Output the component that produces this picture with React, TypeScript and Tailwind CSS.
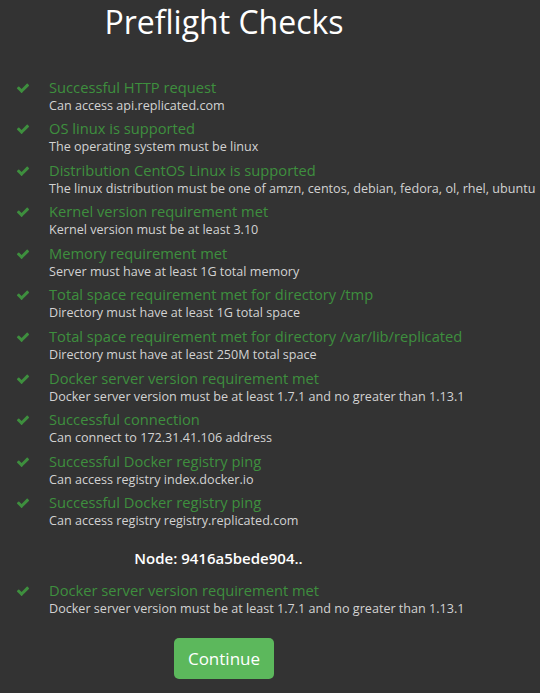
const checks = [
  { title: "Successful HTTP request", detail: "Can access api.replicated.com" },
  { title: "OS linux is supported", detail: "The operating system must be linux" },
  {
    title: "Distribution CentOS Linux is supported",
    detail: "The linux distribution must be one of amzn, centos, debian, fedora, ol, rhel, ubuntu",
  },
  { title: "Kernel version requirement met", detail: "Kernel version must be at least 3.10" },
  { title: "Memory requirement met", detail: "Server must have at least 1G total memory" },
  { title: "Total space requirement met for directory /tmp", detail: "Directory must have at least 1G total space" },
  {
    title: "Total space requirement met for directory /var/lib/replicated",
    detail: "Directory must have at least 250M total space",
  },
  {
    title: "Docker server version requirement met",
    detail: "Docker server version must be at least 1.7.1 and no greater than 1.13.1",
  },
  { title: "Successful connection", detail: "Can connect to 172.31.41.106 address" },
  { title: "Successful Docker registry ping", detail: "Can access registry index.docker.io" },
  { title: "Successful Docker registry ping", detail: "Can access registry registry.replicated.com" },
]

const nodeChecks = [
  {
    title: "Docker server version requirement met",
    detail: "Docker server version must be at least 1.7.1 and no greater than 1.13.1",
  },
]

function CheckIcon() {
  return (
    <svg viewBox="0 0 1792 1792" className="w-[14px] h-[14px]" fill="#3e8f3e">
      <path d="M1671 566q0 40-28 68l-724 724-136 136q-28 28-68 28t-68-28l-136-136-362-362q-28-28-28-68t28-68l136-136q28-28 68-28t68 28l294 295 656-657q28-28 68-28t68 28l136 136q28 28 28 68z" />
    </svg>
  )
}

function CheckRow({ title, detail }: { title: string; detail: string }) {
  return (
    <li className="flex mb-[4.6px]">
      <div className="w-[49px] shrink-0 pl-[16px] pt-[3px]">
        <CheckIcon />
      </div>
      <div className="whitespace-nowrap">
        <div className="text-[14.7px] leading-[19px] text-[#3e8f3e]">{title}</div>
        <div className="text-[12.6px] leading-[18px] text-[#d2d2d2]">{detail}</div>
      </div>
    </li>
  )
}

export default function App() {
  return (
    <div className="min-h-[693px] bg-[#333333] font-['Open_Sans',sans-serif] overflow-hidden">
      <div className="w-[448px]">
        <h1 className="text-[32px] leading-[40px] text-white text-center pt-[2px]">Preflight Checks</h1>
        <ul className="mt-[35.5px]">
          {checks.map((c, i) => (
            <CheckRow key={i} {...c} />
          ))}
        </ul>
        <div className="mt-[18px] text-center text-[15px] leading-[20px] text-white font-semibold pr-[11px]">
          Node: 9416a5bede904..
        </div>
        <ul className="mt-[12.5px]">
          {nodeChecks.map((c, i) => (
            <CheckRow key={i} {...c} />
          ))}
        </ul>
        <div className="flex justify-center mt-[20.5px]">
          <button className="w-[100px] h-[41px] rounded-[5px] bg-[#5cb85c] text-white text-[17px]">
            Continue
          </button>
        </div>
      </div>
    </div>
  )
}
